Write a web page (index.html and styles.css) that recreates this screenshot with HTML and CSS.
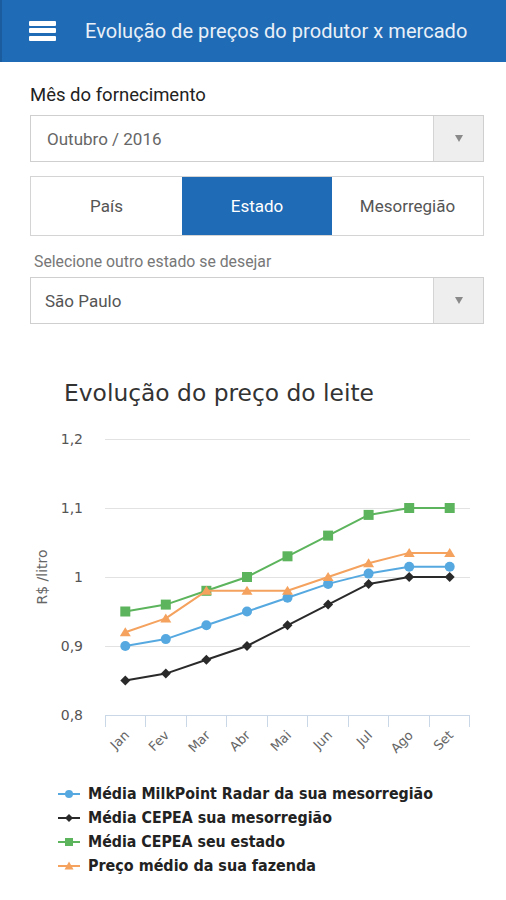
FILE: index.html
```html
<!DOCTYPE html>
<html lang="pt-BR">
<head>
<meta charset="utf-8">
<title>Evolução de preços do produtor x mercado</title>
<link rel="stylesheet" href="styles.css">
</head>
<body>
<header class="topbar">
  <div class="burger"><span></span><span></span><span></span></div>
  <h1 class="topbar-title">Evolução de preços do produtor x mercado</h1>
</header>
<main class="content">
  <label class="field-label">Mês do fornecimento</label>
  <div class="select">
    <div class="select-value">Outubro / 2016</div>
    <div class="select-arrow"><span class="tri"></span></div>
  </div>
  <div class="tabs">
    <div class="tab">País</div>
    <div class="tab active">Estado</div>
    <div class="tab">Mesorregião</div>
  </div>
  <div class="hint">Selecione outro estado se desejar</div>
  <div class="select select-2">
    <div class="select-value">São Paulo</div>
    <div class="select-arrow"><span class="tri"></span></div>
  </div>
</main>
<svg class="chart" width="506" height="576" viewBox="0 324 506 576" xmlns="http://www.w3.org/2000/svg">
  <text class="c-title" x="64" y="401" textLength="310" lengthAdjust="spacingAndGlyphs">Evolução do preço do leite</text>
  <g class="grid">
    <line x1="105" y1="439.5" x2="470" y2="439.5"/>
    <line x1="105" y1="508.5" x2="470" y2="508.5"/>
    <line x1="105" y1="577.5" x2="470" y2="577.5"/>
    <line x1="105" y1="646.5" x2="470" y2="646.5"/>
  </g>
  <g class="ylab">
    <text x="83" y="444">1,2</text>
    <text x="83" y="513">1,1</text>
    <text x="83" y="582">1</text>
    <text x="83" y="651">0,9</text>
    <text x="83" y="720">0,8</text>
  </g>
  <text class="ytitle" transform="translate(47 577) rotate(-90)">R$ /litro</text>
  <g class="axis">
    <line x1="105" y1="715.5" x2="470" y2="715.5"/>
    <line x1="105.5" y1="715" x2="105.5" y2="727"/>
    <line x1="145.5" y1="715" x2="145.5" y2="727"/>
    <line x1="186.5" y1="715" x2="186.5" y2="727"/>
    <line x1="226.5" y1="715" x2="226.5" y2="727"/>
    <line x1="267.5" y1="715" x2="267.5" y2="727"/>
    <line x1="307.5" y1="715" x2="307.5" y2="727"/>
    <line x1="348.5" y1="715" x2="348.5" y2="727"/>
    <line x1="388.5" y1="715" x2="388.5" y2="727"/>
    <line x1="429.5" y1="715" x2="429.5" y2="727"/>
    <line x1="469.5" y1="715" x2="469.5" y2="727"/>
  </g>
  <g class="xlab">
    <text transform="translate(130 736) rotate(-45)">Jan</text>
    <text transform="translate(170 736) rotate(-45)">Fev</text>
    <text transform="translate(211 736) rotate(-45)">Mar</text>
    <text transform="translate(251 736) rotate(-45)">Abr</text>
    <text transform="translate(292 736) rotate(-45)">Mai</text>
    <text transform="translate(333 736) rotate(-45)">Jun</text>
    <text transform="translate(373 736) rotate(-45)">Jul</text>
    <text transform="translate(414 736) rotate(-45)">Ago</text>
    <text transform="translate(454 736) rotate(-45)">Set</text>
  </g>

  <!-- blue: Média MilkPoint Radar -->
  <polyline class="s-blue" points="125.3,646 165.8,639.1 206.4,625.3 247,611.5 287.5,597.7 328.1,583.9 368.6,573.6 409.2,566.7 449.7,566.7"/>
  <g class="m-blue">
    <circle cx="125.3" cy="646" r="5"/><circle cx="165.8" cy="639.1" r="5"/><circle cx="206.4" cy="625.3" r="5"/>
    <circle cx="247" cy="611.5" r="5"/><circle cx="287.5" cy="597.7" r="5"/><circle cx="328.1" cy="583.9" r="5"/>
    <circle cx="368.6" cy="573.6" r="5"/><circle cx="409.2" cy="566.7" r="5"/><circle cx="449.7" cy="566.7" r="5"/>
  </g>

  <!-- black: CEPEA mesorregião -->
  <polyline class="s-black" points="125.3,680.5 165.8,673.6 206.4,659.8 247,646 287.5,625.3 328.1,604.6 368.6,583.9 409.2,577 449.7,577"/>
  <g class="m-black">
    <path d="M125.3 675.5 l5 5 l-5 5 l-5 -5z"/><path d="M165.8 668.6 l5 5 l-5 5 l-5 -5z"/><path d="M206.4 654.8 l5 5 l-5 5 l-5 -5z"/>
    <path d="M247 641 l5 5 l-5 5 l-5 -5z"/><path d="M287.5 620.3 l5 5 l-5 5 l-5 -5z"/><path d="M328.1 599.6 l5 5 l-5 5 l-5 -5z"/>
    <path d="M368.6 578.9 l5 5 l-5 5 l-5 -5z"/><path d="M409.2 572 l5 5 l-5 5 l-5 -5z"/><path d="M449.7 572 l5 5 l-5 5 l-5 -5z"/>
  </g>

  <!-- green: CEPEA estado -->
  <polyline class="s-green" points="125.3,611.5 165.8,604.6 206.4,590.8 247,577 287.5,556.3 328.1,535.6 368.6,514.9 409.2,508 449.7,508"/>
  <g class="m-green">
    <rect x="120.3" y="606.5" width="10" height="10"/><rect x="160.8" y="599.6" width="10" height="10"/><rect x="201.4" y="585.8" width="10" height="10"/>
    <rect x="242" y="572" width="10" height="10"/><rect x="282.5" y="551.3" width="10" height="10"/><rect x="323.1" y="530.6" width="10" height="10"/>
    <rect x="363.6" y="509.9" width="10" height="10"/><rect x="404.2" y="503" width="10" height="10"/><rect x="444.7" y="503" width="10" height="10"/>
  </g>

  <!-- orange: preço médio da fazenda -->
  <polyline class="s-orange" points="125.3,632.2 165.8,618.4 206.4,590.8 247,590.8 287.5,590.8 328.1,577 368.6,563.2 409.2,552.9 449.7,552.9"/>
  <g class="m-orange">
    <path d="M125.3 627.2 l5.5 9 h-11z"/><path d="M165.8 613.4 l5.5 9 h-11z"/><path d="M206.4 585.8 l5.5 9 h-11z"/>
    <path d="M247 585.8 l5.5 9 h-11z"/><path d="M287.5 585.8 l5.5 9 h-11z"/><path d="M328.1 572 l5.5 9 h-11z"/>
    <path d="M368.6 558.2 l5.5 9 h-11z"/><path d="M409.2 547.9 l5.5 9 h-11z"/><path d="M449.7 547.9 l5.5 9 h-11z"/>
  </g>

  <!-- legend -->
  <g class="legend">
    <line class="s-blue" x1="58" y1="794" x2="80" y2="794"/>
    <circle class="m-blue-one" cx="69" cy="794" r="4"/>
    <text x="88" y="799" textLength="345" lengthAdjust="spacingAndGlyphs">Média MilkPoint Radar da sua mesorregião</text>

    <line class="s-black" x1="58" y1="818" x2="80" y2="818"/>
    <path class="m-black-one" d="M69 814 l4 4 l-4 4 l-4 -4z"/>
    <text x="88" y="823" textLength="244" lengthAdjust="spacingAndGlyphs">Média CEPEA sua mesorregião</text>

    <line class="s-green" x1="58" y1="842" x2="80" y2="842"/>
    <rect class="m-green-one" x="65" y="838" width="8" height="8"/>
    <text x="88" y="847" textLength="197" lengthAdjust="spacingAndGlyphs">Média CEPEA seu estado</text>

    <line class="s-orange" x1="58" y1="866" x2="80" y2="866"/>
    <path class="m-orange-one" d="M69 861.5 l4.5 8 h-9z"/>
    <text x="88" y="871" textLength="228" lengthAdjust="spacingAndGlyphs">Preço médio da sua fazenda</text>
  </g>
</svg>
</body>
</html>
```
FILE: styles.css
```css
* { box-sizing: border-box; }
html, body { margin: 0; padding: 0; background: #fff; }
body {
  width: 506px;
  font-family: Roboto, "Noto Sans", sans-serif;
  color: #222;
}
.topbar {
  height: 62px;
  background: #1f6bb5;
  display: flex;
  align-items: center;
  gap: 29px;
  border-left: 2px solid #1a5c9e;
  padding-left: 27px;
}
.burger {
  width: 27px;
  display: flex;
  flex-direction: column;
  gap: 2.5px;
  margin-top: -1px;
}
.burger span {
  display: block;
  height: 5px;
  background: #fff;
  border-radius: 1px;
}
.topbar-title {
  margin: 0;
  font-size: 20px;
  font-weight: 400;
  color: #eaf0f8;
  letter-spacing: 0.05px;
}
.content {
  padding: 23px 22px 0 30px;
  display: flex;
  flex-direction: column;
}
.field-label {
  font-size: 18.5px;
  line-height: 20px;
  color: #222;
  margin-bottom: 10px;
}
.select {
  height: 47px;
  border: 1px solid #cfcfcf;
  display: flex;
  align-items: stretch;
}
.select-value {
  flex: 1;
  display: flex;
  align-items: center;
  padding-left: 16px;
  font-size: 17px;
  color: #666;
}
.select-2 .select-value { padding-left: 14px; color: #555; }
.select-arrow {
  width: 50px;
  background: #eeeeee;
  border-left: 1px solid #d4d4d4;
  display: flex;
  align-items: center;
  justify-content: center;
}
.tri {
  width: 0; height: 0;
  border-left: 4.5px solid transparent;
  border-right: 4.5px solid transparent;
  border-top: 7px solid #8a8a8a;
}
.tabs {
  margin-top: 14px;
  height: 60px;
  border: 1px solid #d4d4d4;
  display: grid;
  grid-template-columns: 151px 150px 1fr;
}
.tab {
  display: flex;
  align-items: center;
  justify-content: center;
  font-size: 17px;
  color: #555;
}
.tab.active {
  background: #1f6bb5;
  color: #fff;
}
.hint {
  margin-top: 16px;
  margin-left: 4px;
  font-size: 15.8px;
  line-height: 20px;
  color: #777;
  margin-bottom: 5px;
}
.chart {
  display: block;
  font-family: "DejaVu Sans", "Liberation Sans", sans-serif;
}
.c-title { font-size: 23px; fill: #333; }
.grid line { stroke: #e2e2e2; stroke-width: 1; }
.ylab text { font-size: 14px; fill: #555; text-anchor: end; }
.ytitle { font-size: 14px; fill: #666; text-anchor: middle; }
.axis line { stroke: #c9d7e6; stroke-width: 1; }
.xlab text { font-size: 13px; fill: #666; text-anchor: end; }
.s-blue, .s-black, .s-green, .s-orange { fill: none; stroke-width: 2; stroke-linejoin: round; }
.s-blue { stroke: #56a9e0; }
.s-black { stroke: #2a2a2a; }
.s-green { stroke: #5cb45c; }
.s-orange { stroke: #f4a25e; }
.m-blue circle, .m-blue-one { fill: #56a9e0; }
.m-black path, .m-black-one { fill: #2a2a2a; }
.m-green rect, .m-green-one { fill: #5cb45c; }
.m-orange path, .m-orange-one { fill: #f4a25e; }
.legend text { font-size: 15px; font-weight: bold; fill: #222; }
```
